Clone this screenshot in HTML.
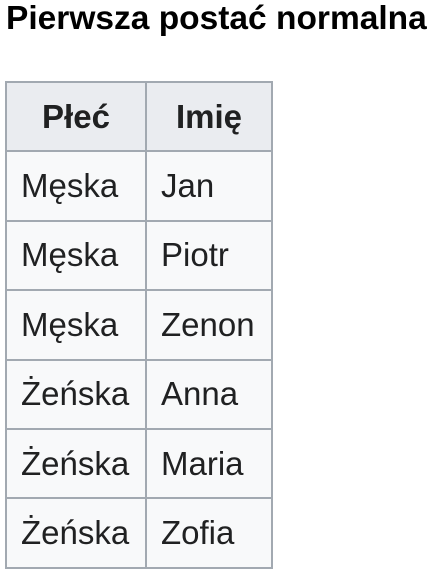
<!DOCTYPE html>
<html><head><style>
body{margin:0;background:#fff;width:437px;height:571px;overflow:hidden;font-family:"Liberation Sans",sans-serif;color:#202122}
h1{position:absolute;left:6px;top:-4px;margin:0;font-size:33.5px;font-weight:bold;line-height:46px;white-space:nowrap;color:#000}
table{position:absolute;left:5px;top:81px;border-collapse:collapse;font-size:33px;table-layout:fixed}
td,th{border:2px solid #a2a9b1;height:69.4px;padding:0 14px;box-sizing:border-box;text-align:left;white-space:nowrap;overflow:hidden}
th{background:#eaecf0;text-align:center;font-weight:bold}
td{background:#f8f9fa}
.c1{width:140px}.c2{width:126px}
</style></head><body>
<h1>Pierwsza postać normalna</h1>
<table>
<tr><th class="c1">Płeć</th><th class="c2">Imię</th></tr>
<tr><td>Męska</td><td>Jan</td></tr>
<tr><td>Męska</td><td>Piotr</td></tr>
<tr><td>Męska</td><td>Zenon</td></tr>
<tr><td>Żeńska</td><td>Anna</td></tr>
<tr><td>Żeńska</td><td>Maria</td></tr>
<tr><td>Żeńska</td><td>Zofia</td></tr>
</table>
</body></html>
